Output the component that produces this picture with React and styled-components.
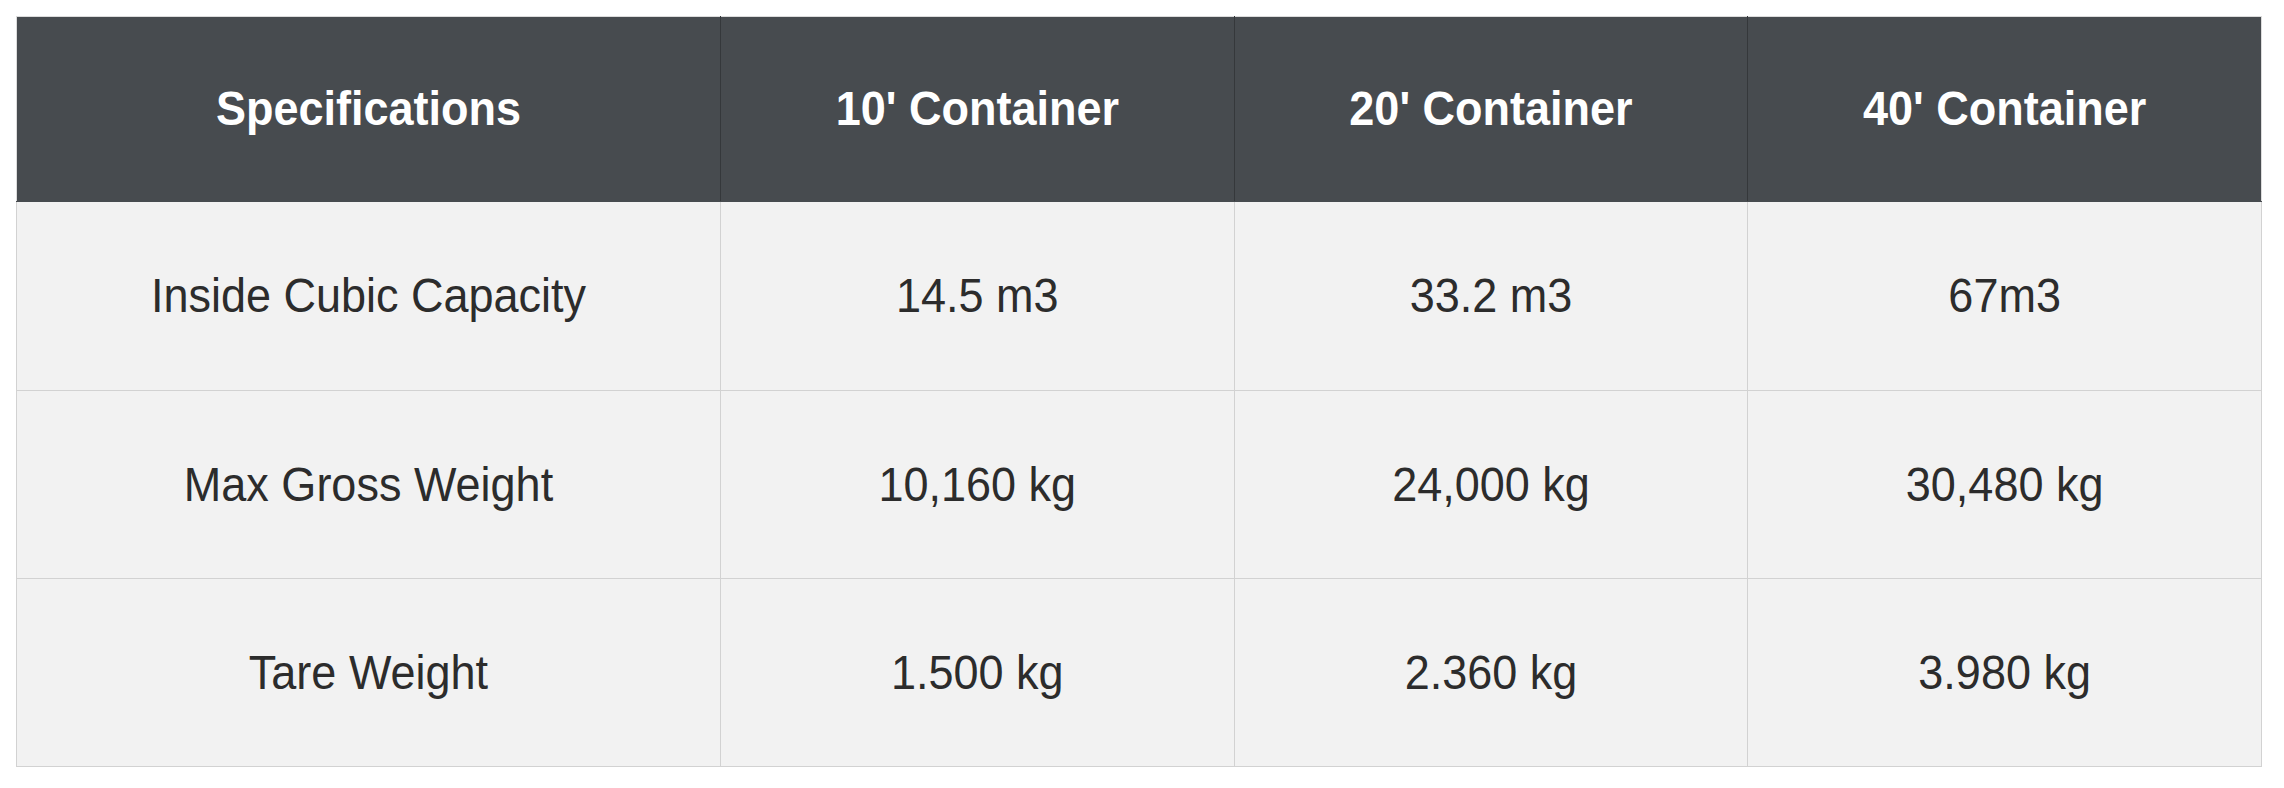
import React from 'react';
import styled, { createGlobalStyle } from "styled-components";

const GlobalStyle = createGlobalStyle`
  body {
    margin: 0;
    background: #ffffff;
    font-family: "Liberation Sans", Arial, sans-serif;
  }
`;

const Page = styled.div`
  padding: 16px;
`;

const Table = styled.table`
  width: 2246px;
  border-collapse: collapse;
  table-layout: fixed;
  border: 1px solid #dcdcdc;
`;

const HeadCell = styled.th`
  height: 184px;
  padding: 0;
  background-color: #474b4f;
  color: #ffffff;
  font-size: 45px;
  font-weight: bold;
  text-align: center;
  vertical-align: middle;
  border-left: 1px solid #35383b;
  border-bottom: 1px solid #474b4f;

  &:first-child {
    border-left: none;
  }
`;

const Cell = styled.td`
  height: ${props => props.tall ? 188 : 187}px;
  padding: 0;
  background-color: #f2f2f2;
  color: #2c2c2c;
  font-size: 45px;
  text-align: center;
  vertical-align: middle;
  border: 1px solid #d2d2d2;
`;

// the screenshot's text is slightly taller than its width suggests
const Label = styled.span`
  display: inline-block;
  transform: scaleY(1.07);
`;

const columns = ["Specifications", "10' Container", "20' Container", "40' Container"];

const rows = [
    ["Inside Cubic Capacity", "14.5 m3", "33.2 m3", "67m3"],
    ["Max Gross Weight", "10,160 kg", "24,000 kg", "30,480 kg"],
    ["Tare Weight", "1.500 kg", "2.360 kg", "3.980 kg"],
];

const App = () =>
    <Page>
        <GlobalStyle/>
        <Table>
            <colgroup>
                <col style={{width: 704}}/>
                <col/>
                <col/>
                <col/>
            </colgroup>
            <thead>
            <tr>
                {columns.map(name => <HeadCell key={name}><Label>{name}</Label></HeadCell>)}
            </tr>
            </thead>
            <tbody>
            {rows.map((row, index) => <tr key={index}>
                {row.map((value, colIndex) =>
                    <Cell key={colIndex} tall={index === 0}><Label>{value}</Label></Cell>
                )}
            </tr>)}
            </tbody>
        </Table>
    </Page>
;

export default App;
